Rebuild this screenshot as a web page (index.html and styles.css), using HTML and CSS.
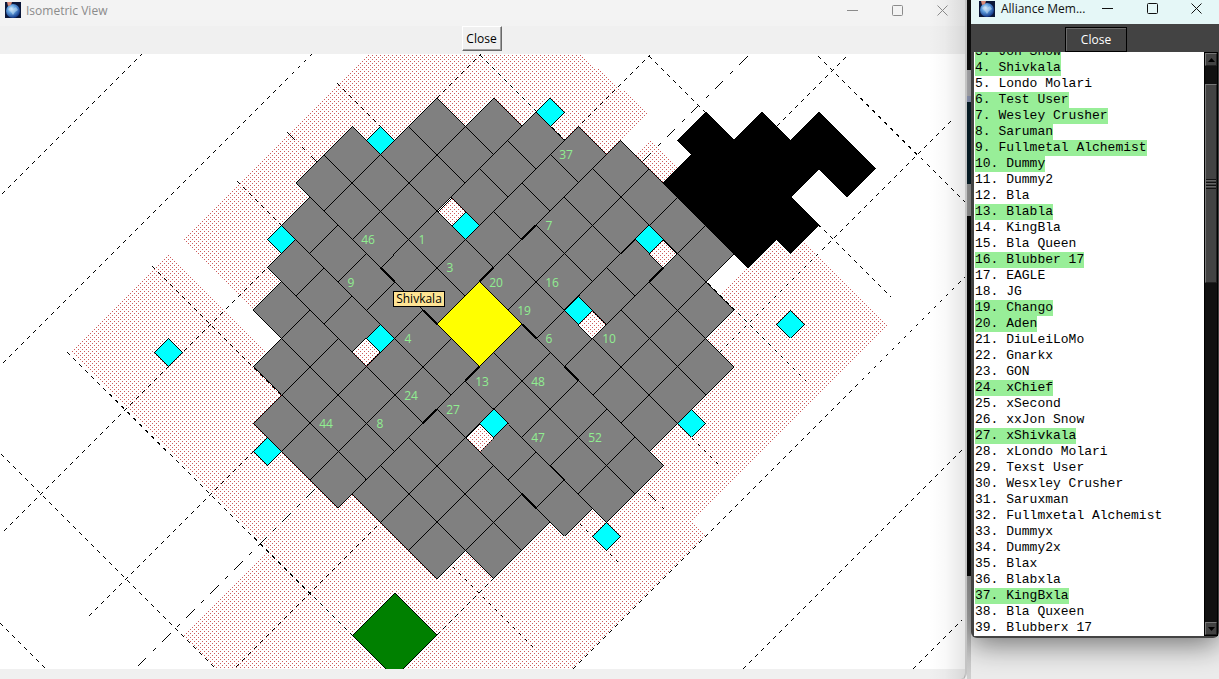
FILE: index.html
```html
<!DOCTYPE html>
<html lang="en">
<head>
<meta charset="utf-8">
<title>Isometric View</title>
<link rel="stylesheet" href="styles.css">
</head>
<body>
<svg class="defs" width="0" height="0" aria-hidden="true">
  <defs>
    <radialGradient id="globe" cx="40%" cy="35%" r="65%">
      <stop offset="0" stop-color="#d3ecfb"/>
      <stop offset=".45" stop-color="#5f9fdd"/>
      <stop offset="1" stop-color="#143a8c"/>
    </radialGradient>
    <symbol id="app-icon" viewBox="0 0 16 16">
      <rect width="16" height="16" fill="#0a1638"/>
      <circle cx="8" cy="9" r="7" fill="url(#globe)"/>
      <path d="M3 7l3-2 2 2 3-2 2 3-3 2-2 3-2-3z" fill="#cfe4f5" opacity=".5"/>
      <path d="M2 0h5l-1 3-3 1z" fill="#d98a76"/>
    </symbol>
    <symbol id="min" viewBox="0 0 11 11"><path d="M0 5.5h11"/></symbol>
    <symbol id="max" viewBox="0 0 11 11"><rect x=".5" y=".5" width="10" height="10" rx="1"/></symbol>
    <symbol id="close" viewBox="0 0 11 11"><path d="M.5 .5l10 10M10.5 .5l-10 10"/></symbol>
  </defs>
</svg>
<div class="desktop">
  <main class="window iso">
    <header class="titlebar">
      <svg class="app-icon"><use href="#app-icon"/></svg>
      <h1>Isometric View</h1>
      <button aria-label="Minimize"><svg><use href="#min"/></svg></button>
      <button aria-label="Maximize"><svg><use href="#max"/></svg></button>
      <button aria-label="Close window"><svg><use href="#close"/></svg></button>
    </header>
    <div class="toolbar"><button class="light-button">Close</button></div>
    <div class="canvas">
      <svg class="map" role="img" aria-label="City map">
        <defs>
          <pattern id="stipple" width="4" height="4" patternUnits="userSpaceOnUse">
            <path d="M0 3h1v1h-1zM2 1h1v1h-1z" fill="#cd5c5c"/>
          </pattern>
        </defs>
        <g transform="translate(0 -54)">
          <!-- areas of influence -->
          <path class="area" d="M169 254l99 99-99 99-99-99zM268 353l99 99-99 99-99-99zM183 240L382 41H565L649 112L480 282L282 339zM650 141l99 99-99 99-99-99zM789 225l99 99-99 99-99-99zM692 324l99 99-99 99-99-99zM607 438l99 99-99 99-99-99zM395 424l212 212-212 212-212-212z"/>
          <!-- province borders -->
          <path class="dash" d="M2 194L142 54M3 363L312 54M4 531L481 54M89 616L650 55M236 667L849 54M437 635L953 119M573 669L965 277M743 669L965 447M913 669L962 620M0 623L46 669M1 454L216 669M67 352L353 636M152 266L537 651M237 181L622 566M337 83L720 466M480 55L806 381M649 56L891 297M818 56L965 202"/>
          <path class="dashdot" d="M138 666L748 56M287 132L664 509"/>
          <!-- tile plane: x runs down-right, y runs up-right -->
          <g class="plane" transform="matrix(7.071 7.071 7.071 -7.071 479.5 324.3)">
            <path class="city" d="M-3 3h4v4h-4zM-3 7h4v4h-4zM-3 11h4v4h-4zM-3 15h4v4h-4zM-3 19h4v4h-4z
              M1 3h4v4h-4zM1 7h4v4h-4zM1 11h4v4h-4zM1 15h4v4h-4zM1 19h4v4h-4z
              M5 3h4v4h-4zM5 9h4v4h-4zM5 13h4v4h-4zM5 19h4v4h-4z
              M9 3h4v4h-4zM9 7h4v4h-4zM9 11h4v4h-4zM9 15h4v4h-4zM9 19h4v4h-4z
              M13 3h4v4h-4zM13 7h4v4h-4zM13 11h4v4h-4zM13 15h4v4h-4z
              M17 3h4v4h-4zM17 7h4v4h-4zM17 11h4v4h-4z"/>
            <path class="city" d="M3 -1h4v4h-4zM7 -1h4v4h-4zM11 -1h4v4h-4zM15 -1h4v4h-4zM19 -1h4v4h-4z
              M3 -5h4v4h-4zM7 -5h4v4h-4zM11 -5h4v4h-4zM15 -5h4v4h-4zM19 -5h4v4h-4z
              M3 -9h4v4h-4zM9 -9h4v4h-4zM13 -9h4v4h-4zM17 -9h4v4h-4z
              M3 -13h4v4h-4zM7 -13h4v4h-4zM11 -13h4v4h-4zM15 -13h4v4h-4z
              M3 -17h4v4h-4zM7 -17h4v4h-4zM11 -17h4v4h-4zM15 -17h4v4h-4z
              M3 -21h4v4h-4zM7 -21h4v4h-4zM11 -21h4v4h-4z"/>
            <path class="city" d="M-1 -7h4v4h-4zM-1 -11h4v4h-4zM-1 -15h4v4h-4zM-1 -19h4v4h-4zM-1 -23h4v4h-4z
              M-5 -7h4v4h-4zM-5 -11h4v4h-4zM-5 -15h4v4h-4zM-5 -19h4v4h-4zM-5 -23h4v4h-4z
              M-9 -7h4v4h-4zM-9 -15h4v4h-4zM-9 -19h4v4h-4zM-9 -23h4v4h-4z
              M-11 -11h4v4h-4zM-15 -11h4v4h-4zM-19 -11h4v4h-4z
              M-13 -15h4v4h-4zM-17 -15h4v4h-4zM-13 -19h4v4h-4z
              M-13 -7h4v4h-4zM-17 -7h4v4h-4zM-21 -7h4v4h-4z"/>
            <path class="city" d="M-7 -3h4v4h-4zM-11 -3h4v4h-4zM-15 -3h4v4h-4zM-19 -3h4v4h-4zM-23 -3h4v4h-4z
              M-7 1h4v4h-4zM-11 1h4v4h-4zM-15 1h4v4h-4zM-19 1h4v4h-4zM-23 1h4v4h-4z
              M-7 5h4v4h-4zM-7 9h4v4h-4zM-7 13h4v4h-4zM-7 17h4v4h-4z
              M-11 7h4v4h-4zM-11 11h4v4h-4zM-11 15h4v4h-4z
              M-15 5h4v4h-4zM-15 9h4v4h-4zM-15 13h4v4h-4z
              M-19 5h4v4h-4zM-19 9h4v4h-4z"/>
            <path class="seam" d="M-3 9v2M5 15v2M-11 -3h2M-5 -3h2M-3 3v2M3 -5v2M3 -11v2M3 3h2M9 3h2M9 15v2M15 -5h2M15 -9h2"/>
            <path class="void" d="M1 31H5V35H9V39H17V35H13V31H17V27H15V23H3V27H1z"/>
            <path class="capital" d="M-3 -3h6v6h-6z"/>
            <path class="forest" d="M13 -31h6v6h-6z"/>
            <path class="site" d="M-21 -25h2v2h-2zM-21 -9h2v2h-2zM-21 5h2v2h-2zM-11 19h2v2h-2zM21 21h2v2h-2zM21 7h2v2h-2zM23 -7h2v2h-2zM-7 -25h2v2h-2zM-9 5h2v2h-2zM5 17h2v2h-2zM5 7h2v2h-2zM-7 -9h2v2h-2zM7 -7h2v2h-2z"/>
          </g>
          <!-- empty slots beside inner sites -->
          <g>
            <path class="slot" d="M452 198l14 14-14 14-14-14zM663 240l14 14-14 14-14-14zM592 311l14 14-14 14-14-14zM366 338l14 14-14 14-14-14zM480 424l14 14-14 14-14-14z"/>
            <path class="area" d="M452 198l14 14-14 14-14-14zM663 240l14 14-14 14-14-14zM592 311l14 14-14 14-14-14zM366 338l14 14-14 14-14-14zM480 424l14 14-14 14-14-14z"/>
          </g>
          <g class="labels">
            <text x="566" y="159">37</text><text x="549" y="230">7</text>
            <text x="368" y="244">46</text><text x="422" y="244">1</text>
            <text x="450" y="272">3</text><text x="351" y="287">9</text>
            <text x="496" y="287">20</text><text x="552" y="287">16</text>
            <text x="524" y="315">19</text><text x="408" y="343">4</text>
            <text x="549" y="343">6</text><text x="609" y="343">10</text>
            <text x="482" y="386">13</text><text x="538" y="386">48</text>
            <text x="411" y="400">24</text><text x="453" y="414">27</text>
            <text x="326" y="428">44</text><text x="380" y="428">8</text>
            <text x="538" y="442">47</text><text x="595" y="442">52</text>
          </g>
        </g>
      </svg>
      <div class="tooltip" role="tooltip">Shivkala</div>
    </div>
    <footer class="statusbar"></footer>
  </main>
  <div class="backdrop"></div>
  <aside class="side">
    <section class="window members">
      <header class="titlebar">
        <svg class="app-icon"><use href="#app-icon"/></svg>
        <h2>Alliance Mem...</h2>
        <button aria-label="Minimize"><svg><use href="#min"/></svg></button>
        <button aria-label="Maximize"><svg><use href="#max"/></svg></button>
        <button aria-label="Close window"><svg><use href="#close"/></svg></button>
      </header>
      <div class="toolbar"><button class="dark-button">Close</button></div>
      <div class="list-frame">
        <ul class="list">
          <li><mark>3. Jon Snow</mark></li>
          <li><mark>4. Shivkala</mark></li>
          <li>5. Londo Molari</li>
          <li><mark>6. Test User</mark></li>
          <li><mark>7. Wesley Crusher</mark></li>
          <li><mark>8. Saruman</mark></li>
          <li><mark>9. Fullmetal Alchemist</mark></li>
          <li><mark>10. Dummy</mark></li>
          <li>11. Dummy2</li>
          <li>12. Bla</li>
          <li><mark>13. Blabla</mark></li>
          <li>14. KingBla</li>
          <li>15. Bla Queen</li>
          <li><mark>16. Blubber 17</mark></li>
          <li>17. EAGLE</li>
          <li>18. JG</li>
          <li><mark>19. Chango</mark></li>
          <li><mark>20. Aden</mark></li>
          <li>21. DiuLeiLoMo</li>
          <li>22. Gnarkx</li>
          <li>23. GON</li>
          <li><mark>24. xChief</mark></li>
          <li>25. xSecond</li>
          <li>26. xxJon Snow</li>
          <li><mark>27. xShivkala</mark></li>
          <li>28. xLondo Molari</li>
          <li>29. Texst User</li>
          <li>30. Wesxley Crusher</li>
          <li>31. Saruxman</li>
          <li>32. Fullmxetal Alchemist</li>
          <li>33. Dummyx</li>
          <li>34. Dummy2x</li>
          <li>35. Blax</li>
          <li>36. Blabxla</li>
          <li><mark>37. KingBxla</mark></li>
          <li>38. Bla Quxeen</li>
          <li>39. Blubberx 17</li>
        </ul>
        <div class="scrollbar">
          <button aria-label="Scroll up"><svg viewBox="0 0 7 4"><path d="M0 4L3.5 0L7 4z"/></svg></button>
          <div class="trough"><div class="thumb"><span class="grip"></span></div></div>
          <button aria-label="Scroll down"><svg viewBox="0 0 7 4"><path d="M0 0L3.5 4L7 0z"/></svg></button>
        </div>
      </div>
    </section>
  </aside>
</div>
</body>
</html>
```
FILE: styles.css
```css
* { box-sizing: border-box; }
body {
  margin: 0;
  font-family: "Open Sans", "Noto Sans", sans-serif;
  font-size: 12px;
}
.defs { position: absolute; }
.desktop {
  display: grid;
  grid-template-columns: 1fr 4px 248px;
  grid-template-rows: minmax(0, 1fr);
  height: 100vh;
  overflow: hidden;
  background: #ececec;
}
.window { display: flex; flex-direction: column; min-width: 0; min-height: 0; }
.titlebar { display: flex; align-items: center; flex: none; }
.titlebar h1, .titlebar h2 {
  flex: 1;
  margin: 0;
  font-size: 12px;
  font-weight: 400;
  white-space: nowrap;
}
.titlebar button {
  display: grid;
  place-items: center;
  width: 45px;
  height: 20px;
  padding: 0;
  border: 0;
  background: none;
  color: inherit;
}
.titlebar button svg { width: 11px; height: 11px; fill: none; stroke: currentColor; }
.app-icon { width: 16px; height: 16px; flex: none; }

.iso {
  position: relative;
  background: #f0f0f0;
  border-right: 2px solid #c4c4c4;
  border-bottom-right-radius: 6px;
}
.iso::after {
  content: "";
  position: absolute;
  inset: 0 0 0 auto;
  width: 36px;
  background: linear-gradient(to right, #0000, #00000006 45%, #0000001a);
  pointer-events: none;
}
.iso .titlebar { height: 26px; padding: 0 0 6px 5px; background: #f3f3f3; color: #8b8b8b; }
.iso .titlebar h1 { padding-left: 5px; }
.iso .toolbar { display: flex; justify-content: center; height: 28px; padding-right: 2px; flex: none; }
.light-button {
  width: 40px;
  height: 25px;
  padding: 0;
  border: 1px solid;
  border-color: #fff #696969 #696969 #fff;
  box-shadow: inset -1px -1px #a0a0a0;
  background: #f0f0f0;
  font: inherit;
  color: #000;
}
.canvas { position: relative; flex: 1; min-height: 0; background: #fff; overflow: hidden; }
.map { display: block; width: 100%; height: 100%; shape-rendering: crispEdges; }
.statusbar { height: 10px; flex: none; }

.area { fill: url(#stipple); }
.dash, .dashdot { fill: none; stroke: #000; stroke-width: 1; }
.dash { stroke-dasharray: 4 4.5; }
.dashdot { stroke-dasharray: 12 9 4 9; }
.plane path { stroke: #000; stroke-width: 1; vector-effect: non-scaling-stroke; }
.plane .city { fill: #808080; }
.plane .seam { fill: none; stroke-width: 2; }
.plane .void { fill: #000; }
.plane .capital { fill: #ff0; }
.plane .forest { fill: #008000; }
.plane .site { fill: #0ff; }
.slot { fill: #fff; stroke: #000; }
.labels { fill: #90ee90; text-anchor: middle; font-size: 12px; }
.tooltip {
  position: absolute;
  left: 393px;
  top: 237px;
  width: 52px;
  border: 1px solid #000;
  background: #ffe495;
  line-height: 14px;
  text-align: center;
}

.backdrop {
  background: linear-gradient(#111 0 70px, #c9c9cd 70px 96px, #a4afd0 96px 102px, #07222d 102px 184px, #aaa 184px 216px, #090909 216px 576px, #a5a5a5 576px, #d0d0d0);
}
.side { display: flex; padding-bottom: 41px; min-width: 0; min-height: 0; }
.members {
  flex: 1;
  padding: 0 0 2px;
  background: #434343;
  border-radius: 0 0 6px 6px;
  box-shadow: 0 6px 30px #0008;
}
.members .titlebar { height: 24px; padding: 0 0 7px 8px; background: #e5f7f7; color: #111; }
.members .titlebar h2 { padding-left: 6px; }
.members .titlebar button { width: 45px; }
.members .toolbar { display: flex; justify-content: center; align-items: flex-end; height: 28px; padding-left: 2px; flex: none; }
.dark-button {
  width: 62px;
  height: 25px;
  padding: 0;
  border: 1px solid #000;
  box-shadow: inset 1px 1px #6b6b6b;
  background: #434343;
  color: #fff;
  font: inherit;
}
.list-frame { display: flex; flex: 1; min-height: 0; padding: 0 1px 0 3px; }
.list {
  display: flex;
  flex-direction: column;
  justify-content: flex-end;
  flex: 1;
  margin: 0;
  padding: 0 1px;
  overflow: hidden;
  list-style: none;
  background: #fff;
  color: #000;
  font: 13px/16px "Liberation Mono", monospace;
  white-space: nowrap;
}
.list li { flex: none; height: 16px; }
.list mark { display: inline-block; height: 16px; background: #98ee98; color: inherit; vertical-align: top; }
.scrollbar { display: flex; flex-direction: column; width: 14px; background: #111; border: 1px solid #000; }
.scrollbar button {
  display: grid;
  place-items: center;
  height: 13px;
  padding: 0;
  border: 1px solid;
  border-color: #777 #222 #222 #777;
  background: #434343;
}
.scrollbar svg { width: 7px; height: 4px; }
.trough { flex: 1; padding-top: 18px; }
.thumb {
  display: grid;
  place-items: center;
  height: 37%;
  border: 1px solid;
  border-color: #777 #222 #222 #777;
  background: #434343;
}
.grip { width: 10px; height: 10px; background: repeating-linear-gradient(#111 0 1px, #666 1px 2px, #434343 2px 3px); }
```
